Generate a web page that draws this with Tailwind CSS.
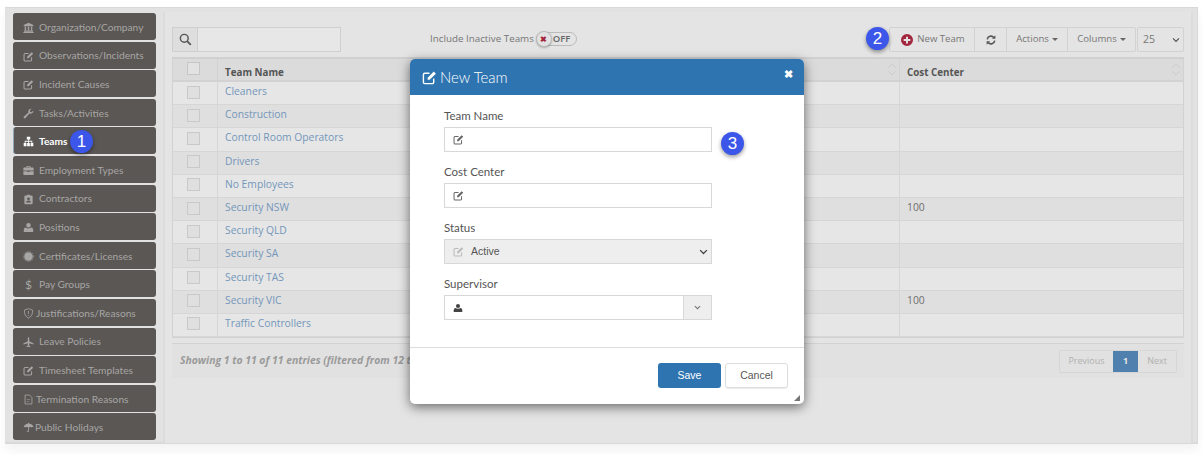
<!DOCTYPE html>
<html lang="en">
<head>
    <meta charset="UTF-8">
    <meta name="viewport" content="width=device-width, initial-scale=1.0">
    <title>Teams</title>
    <script src="https://cdn.jsdelivr.net/npm/@tailwindcss/browser@4"></script>
</head>
<body class="bg-white w-[1203px] h-[455px] overflow-hidden relative font-['Open_Sans',sans-serif]">
    <!-- shared icons -->
    <svg class="hidden">
        <symbol id="i-edit" viewBox="0 0 16 16"><path d="M12.5 9v4a1.5 1.5 0 0 1-1.5 1.5H3A1.5 1.5 0 0 1 1.500 13V5A1.500 1.500 0 0 1 3 3.500h5" fill="none" stroke="currentColor" stroke-width="1.500"/><path d="M6 8.300 12.600 1.700l2.200 2.200L8.200 10.500H6z" fill="currentColor"/></symbol>
        <symbol id="i-bank" viewBox="0 0 16 16"><path d="M8 1 15 4.500V6H1V4.500zM2.500 7h2v5h-2zM7 7h2v5H7zM11.500 7h2v5h-2zM1.500 12.500h13V14h-13zM.5 14.500h15V16H.5z" fill="currentColor"/></symbol>
        <symbol id="i-wrench" viewBox="0 0 16 16"><path d="M15 3.500a4.200 4.200 0 0 1-5.600 4.600L3.600 14.600a1.500 1.500 0 0 1-2.200-2.100L7.900 6.600A4.200 4.200 0 0 1 12.500 1L10 3.500l.5 2 2 .5z" fill="currentColor"/></symbol>
        <symbol id="i-sitemap" viewBox="0 0 16 16"><path d="M5.500 1h5v4h-2v2h5v3H15v5h-4v-5h1.300V8.300H8.600V10H10v5H6v-5h1.400V8.300H3.700V10H5v5H1v-5h1.500V7h5V5h-2z" fill="currentColor"/></symbol>
        <symbol id="i-case" viewBox="0 0 16 16"><path d="M5 3.500V2.500A1 1 0 0 1 6 1.500h4a1 1 0 0 1 1 1v1h3.500A1 1 0 0 1 15.500 4.500V8h-15V4.500a1 1 0 0 1 1-1zM6.200 3.500h3.600v-.9H6.200zM.5 9h6v1h3V9h6v4.500a1 1 0 0 1-1 1h-13a1 1 0 0 1-1-1z" fill="currentColor"/></symbol>
        <symbol id="i-badge" viewBox="0 0 16 16"><path fill-rule="evenodd" d="M3.500 2H6V1h4v1h2.500A1.500 1.500 0 0 1 14 3.500v10a1.500 1.500 0 0 1-1.500 1.500h-9A1.500 1.500 0 0 1 2 13.500v-10A1.500 1.500 0 0 1 3.500 2zM8 5a2 2 0 1 0 0 4 2 2 0 0 0 0-4zM4.500 12.500h7c0-2-1.500-3-3.500-3s-3.500 1-3.500 3z" fill="currentColor"/></symbol>
        <symbol id="i-user" viewBox="0 0 16 16"><path d="M8 1.500a3.300 3.300 0 1 1 0 6.600 3.300 3.300 0 0 1 0-6.600zM2.500 14.500c-1 0-1.500-.6-1.500-1.500 0-2.500.8-5 3.200-5 .8.800 2.200 1.300 3.800 1.300s3-.5 3.800-1.300c2.400 0 3.200 2.500 3.200 5 0 .9-.5 1.500-1.500 1.500z" fill="currentColor"/></symbol>
        <symbol id="i-cert" viewBox="0 0 16 16"><circle cx="8" cy="8" r="6.200" fill="currentColor"/><circle cx="8" cy="8" r="7.200" fill="none" stroke="currentColor" stroke-dasharray="2 1.500"/></symbol>
        <symbol id="i-shield" viewBox="0 0 16 16"><path d="M8 1 14 3c0 6-1.500 9.500-6 12C3.500 12.500 2 9 2 3z" fill="none" stroke="currentColor" stroke-width="1.200"/><path d="M7.300 4.500h1.400L8.400 9h-.8zM7.300 10h1.400v1.400H7.300z" fill="currentColor"/></symbol>
        <symbol id="i-plane" viewBox="0 0 16 16"><path d="M8 .5c.7 0 1 .8 1 1.800V6l6.500 3.500V11L9 9v3.500l2 1.500v1l-3-.8-3 .8v-1l2-1.500V9L.5 11V9.500L7 6V2.300C7 1.300 7.300.5 8 .5z" fill="currentColor"/></symbol>
        <symbol id="i-file" viewBox="0 0 16 16"><path d="M3 1.500h6.500L13 5v9.500H3z" fill="none" stroke="currentColor" stroke-width="1.200"/><path d="M5.500 7.500h5v1h-5zM5.500 10h3.500v1H5.500z" fill="currentColor"/></symbol>
        <symbol id="i-umbrella" viewBox="0 0 16 16"><path d="M7.400 1h1.200v1.100c3.700.3 6.400 2.700 6.900 6-1-.9-2.400-.9-3.400 0-1-.9-2.300-.9-3.300-.2v4.900c0 2.200-3.500 2.200-3.500 0h1.200c0 .8 1.100.8 1.100 0V7.900c-1-.7-2.300-.7-3.300.2-1-.9-2.400-.9-3.400 0 .5-3.300 3.200-5.700 6.500-6z" fill="currentColor"/></symbol>
        <symbol id="i-sort" viewBox="0 0 12 18"><path d="M1.500 7 6 2.500 10.500 7M1.500 11 6 15.500 10.500 11" fill="none" stroke="currentColor" stroke-width="1"/></symbol>
        <symbol id="i-chev" viewBox="0 0 12 8"><path d="M1.500 1.500 6 6l4.500-4.500" fill="none" stroke="currentColor" stroke-width="1.800"/></symbol>
    </svg>

    <!-- dimmed page -->
    <div class="absolute left-[5px] top-[7px] w-[1193px] h-[437px] bg-[#e2e2e2] border-b-[2px] border-r border-t border-[#d9d9d9] shadow-[0_6px_10px_rgba(0,0,0,0.05)] flex">
        <nav id="menu" class="w-[158px] shrink-0 pl-[8px] pt-[5px] flex flex-col gap-[1.600px]"></nav>

        <main class="w-[1030px] h-[431px] mt-[4px] border-l-2 border-r-2 border-[#dcdcdc] bg-[#e4e4e4] pl-[7px] pt-[15px]">
            <div class="w-[1013px] h-[30px] flex items-start">
                <div class="flex w-[169px] h-[25px] border border-[#cfcfcf]">
                    <span class="w-[25px] flex items-center justify-center bg-[#dedede] border-r border-[#cfcfcf]">
                        <svg class="w-[13px] h-[13px] text-[#555]" viewBox="0 0 16 16"><circle cx="6.500" cy="6.500" r="4.800" fill="none" stroke="currentColor" stroke-width="1.800"/><path d="m10 10 4.500 4.500" stroke="currentColor" stroke-width="2.200"/></svg>
                    </span>
                    <span class="flex-1 bg-[#e7e7e7]"></span>
                </div>
                <span class="ml-[89px] mt-[4px] text-[9.800px] leading-[16px] text-[#767676] whitespace-nowrap">Include Inactive Teams</span>
                <span class="ml-[2px] mt-[5px] w-[41px] h-[14px] rounded-full border border-[#bbb] relative">
                    <span class="absolute left-[-1px] top-[-2px] w-[16px] h-[16px] rounded-full bg-[#e2e2e2] border border-[#bbb] shadow-[0_1px_2px_rgba(0,0,0,0.25)] flex items-center justify-center text-[#a3263f] text-[8px] font-bold leading-none">✖</span>
                    <span class="absolute left-[16px] top-[-1px] text-[9.500px] leading-[14px] font-semibold text-[#666]">OFF</span>
                </span>
                <div class="ml-auto mr-[49px] flex h-[25px] border border-[#d2d2d2] rounded-[2px] bg-[#e4e4e4] text-[9.600px] text-[#777]">
                    <span class="w-[85px] flex items-center justify-center gap-[4px] pl-[2px] border-r border-[#d2d2d2]">
                        <svg class="w-[12px] h-[12px] text-[#a3263f]" viewBox="0 0 16 16"><path fill-rule="evenodd" d="M8 0a8 8 0 1 1 0 16A8 8 0 0 1 8 0zM6.700 3.500v3.200H3.500v2.600h3.200v3.200h2.600V9.300h3.200V6.700H9.300V3.500z" fill="currentColor"/></svg>
                        New Team
                    </span>
                    <span class="w-[32px] flex items-center justify-center border-r border-[#d2d2d2] text-[#555]">
                        <svg class="w-[10px] h-[10px]" viewBox="0 0 16 16"><path d="M2 7a6 6 0 0 1 10.500-3M14 9a6 6 0 0 1-10.500 3" fill="none" stroke="currentColor" stroke-width="2.500"/><path d="M15 .5V6H9.500zM1 15.500V10h5.500z" fill="currentColor"/></svg>
                    </span>
                    <span class="w-[61px] flex items-center justify-center gap-[3px] border-r border-[#d2d2d2]">Actions <i class="border-x-[3px] border-t-[3px] border-x-transparent border-t-[#666]"></i></span>
                    <span class="w-[67px] flex items-center justify-center gap-[3px]">Columns <i class="border-x-[3px] border-t-[3px] border-x-transparent border-t-[#666]"></i></span>
                </div>
            </div>

            <div class="w-[1012px] border border-t-2 border-[#d2d2d2] border-t-[#d0d0d0]">
                <div class="flex h-[23px] bg-[#dbdbdb] border-b-2 border-[#d2d2d2] text-[9.800px] font-bold text-[#555]">
                    <span class="w-[45px] border-r border-[#d2d2d2] flex pl-[14px] pt-[3px]"><i class="w-[13px] h-[13px] border border-[#c6c6c6] bg-[#e2e2e2] block"></i></span>
                    <span class="w-[682px] pl-[7px] pt-[5px] leading-[17px] border-r border-[#d2d2d2] flex justify-between pr-[2px]">Team Name <svg class="w-[10px] h-[15px] mt-[-2px] text-[#c8c8c8]"><use href="#i-sort"/></svg></span>
                    <span class="flex-1 pl-[7px] pt-[5px] leading-[17px] flex justify-between pr-[2px]">Cost Center <svg class="w-[10px] h-[15px] mt-[-2px] text-[#c8c8c8]"><use href="#i-sort"/></svg></span>
                </div>
                <div id="rows"></div>
            </div>

            <div class="w-[1012px] h-[35px] mt-[5px] bg-[#e1e1e1] border-t border-[#d2d2d2] flex items-center justify-between pl-[8px] pr-[7px]">
                <span class="text-[10.400px] italic font-bold text-[#9a9a9a] whitespace-nowrap">Showing 1 to 11 of 11 entries (filtered from 12 total entries)</span>
                <div class="flex h-[23px] border border-[#d6d6d6] rounded-[2px] text-[9px] text-[#b0b0b0]">
                    <span class="w-[53px] flex items-center justify-center">Previous</span>
                    <span class="w-[25px] flex items-center justify-center bg-[#5080ad] text-[#e6e6e6] font-bold">1</span>
                    <span class="w-[38px] flex items-center justify-center">Next</span>
                </div>
            </div>
        </main>
    </div>

    <!-- page size select sits in the toolbar row -->
    <div class="absolute left-[1137px] top-[27px] w-[47px] h-[25px] border border-[#d2d2d2] rounded-[2px] flex items-center justify-between pl-[5px] pr-[3px] text-[10.500px] text-[#777]">
        25 <svg class="w-[8px] h-[6px] text-[#555]"><use href="#i-chev"/></svg>
    </div>

    <!-- modal -->
    <div class="absolute left-[410px] top-[59px] w-[394px] h-[345px] bg-white rounded-[5px] shadow-[0_3px_12px_rgba(0,0,0,0.55)] overflow-hidden">
        <div class="h-[36px] bg-[#2e74b0] text-white flex items-center justify-between pl-[12px] pr-[11px]">
            <span class="flex items-center gap-[3px] font-['Lato',sans-serif] font-light text-[15px]"><svg class="w-[15px] h-[15px]"><use href="#i-edit"/></svg>New Team</span>
            <span class="text-[11px] leading-none font-bold mt-[-8px]">✖</span>
        </div>
        <div class="h-[253px] border-b border-[#ddd] pl-[34px] pt-[13px] font-['Lato',sans-serif] text-[11.500px] text-[#555]">
            <label class="block leading-[15px]">Team Name</label>
            <div class="mt-[4px] w-[268px] h-[25px] border border-[#d8d8d8] flex items-center pl-[8px] text-[#666]"><svg class="w-[11px] h-[11px]"><use href="#i-edit"/></svg></div>
            <label class="block leading-[15px] mt-[12px]">Cost Center</label>
            <div class="mt-[4px] w-[268px] h-[25px] border border-[#d8d8d8] flex items-center pl-[8px] text-[#666]"><svg class="w-[11px] h-[11px]"><use href="#i-edit"/></svg></div>
            <label class="block leading-[15px] mt-[12px]">Status</label>
            <div class="mt-[4px] w-[268px] h-[25px] border border-[#d8d8d8] bg-[#eee] flex items-center pl-[8px] pr-[3px] text-[#bbb]">
                <svg class="w-[11px] h-[11px]"><use href="#i-edit"/></svg>
                <span class="ml-[7px] font-['Liberation_Sans',sans-serif] text-[10.500px] text-[#555]">Active</span>
                <svg class="ml-auto w-[9px] h-[6px] text-[#444]"><use href="#i-chev"/></svg>
            </div>
            <label class="block leading-[15px] mt-[12px]">Supervisor</label>
            <div class="mt-[4px] w-[268px] h-[25px] border border-[#d8d8d8] flex items-center pl-[8px] text-[#444]">
                <svg class="w-[10px] h-[10px]"><use href="#i-user"/></svg>
                <span class="ml-auto w-[28px] h-full bg-[#eee] border-l border-[#d8d8d8] flex items-center justify-center text-[#777]"><svg class="w-[7px] h-[5px]"><use href="#i-chev"/></svg></span>
            </div>
        </div>
        <div class="flex justify-end gap-[4px] pr-[16px] pt-[15px] font-['Liberation_Sans',sans-serif] text-[10.500px]">
            <span class="w-[63px] h-[25px] bg-[#2e74b0] text-white rounded-[3px] flex items-center justify-center">Save</span>
            <span class="w-[63px] h-[25px] border border-[#ddd] text-[#555] rounded-[3px] flex items-center justify-center shadow-[0_1px_1px_rgba(0,0,0,0.08)]">Cancel</span>
        </div>
        <i class="absolute right-[4px] bottom-[3px] border-l-[6px] border-b-[6px] border-l-transparent border-b-[#777]"></i>
    </div>

    <!-- numbered callouts -->
    <span class="absolute left-[70px] top-[130px] w-[23px] h-[23px] rounded-full bg-[#3b56e8] text-white text-[17px] leading-[23px] text-center font-['Liberation_Sans',sans-serif] shadow-[0_2px_4px_rgba(0,0,0,0.4)]">1</span>
    <span class="absolute left-[866px] top-[27px] w-[23px] h-[23px] rounded-full bg-[#3b56e8] text-white text-[17px] leading-[23px] text-center font-['Liberation_Sans',sans-serif] shadow-[0_2px_4px_rgba(0,0,0,0.4)]">2</span>
    <span class="absolute left-[721px] top-[132px] w-[23px] h-[23px] rounded-full bg-[#3b56e8] text-white text-[17px] leading-[23px] text-center font-['Liberation_Sans',sans-serif] shadow-[0_2px_4px_rgba(0,0,0,0.4)]">3</span>

    <script>
        const menu = [
            ['i-bank', 'Organization/Company', 5],
            ['i-edit', 'Observations/Incidents', 5],
            ['i-edit', 'Incident Causes', 5],
            ['i-wrench', 'Tasks/Activities', 5],
            ['i-sitemap', 'Teams', 5, true],
            ['i-case', 'Employment Types', 5],
            ['i-badge', 'Contractors', 5],
            ['i-user', 'Positions', 5],
            ['i-cert', 'Certificates/Licenses', 5],
            ['$', 'Pay Groups', 5],
            ['i-shield', 'Justifications/Reasons', 2],
            ['i-plane', 'Leave Policies', 5],
            ['i-edit', 'Timesheet Templates', 5],
            ['i-file', 'Termination Reasons', 2],
            ['i-umbrella', 'Public Holidays', 1]
        ];
        document.getElementById('menu').innerHTML = menu.map(([icon, label, gap, active]) => {
            const glyph = icon === '$'
                ? '<span class="w-[11px] text-center text-[12px] leading-none">$</span>'
                : `<svg class="w-[11px] h-[11px] shrink-0"><use href="#${icon}"/></svg>`;
            const tone = active ? 'font-bold text-white border-l-[#8fa9b8]' : 'text-[#a8a6a4] border-l-[#5a5755]';
            return `<a style="gap:${gap}px" class="h-[27px] shrink-0 w-[143px] flex items-center pl-[9px] pt-[2px] rounded-[3px] bg-[#5a5755] border-l font-['Lato',sans-serif] text-[10.200px] ${tone}">${glyph}<span>${label}</span></a>`;
        }).join('');

        const teams = [
            ['Cleaners', ''], ['Construction', ''], ['Control Room Operators', ''], ['Drivers', ''],
            ['No Employees', ''], ['Security NSW', '100'], ['Security QLD', ''], ['Security SA', ''],
            ['Security TAS', ''], ['Security VIC', '100'], ['Traffic Controllers', '']
        ];
        document.getElementById('rows').innerHTML = teams.map(([name, cost], i) => `
            <div class="flex h-[23.200px] border-b border-[#d6d6d6] text-[10.300px] ${i % 2 ? 'bg-[#dfdfdf]' : 'bg-[#e6e6e6]'}">
                <span class="w-[45px] border-r border-[#d6d6d6] flex pl-[14px] pb-[2px] items-center"><i class="w-[13px] h-[13px] border border-[#c9c9c9] bg-[#dfdfdf] block"></i></span>
                <span class="w-[682px] pl-[7px] leading-[18px] text-[#7396ba] border-r border-[#d6d6d6]">${name}</span>
                <span class="flex-1 pl-[7px] leading-[18px] text-[#6e6e6e]">${cost}</span>
            </div>`).join('');
    </script>
</body>
</html>
